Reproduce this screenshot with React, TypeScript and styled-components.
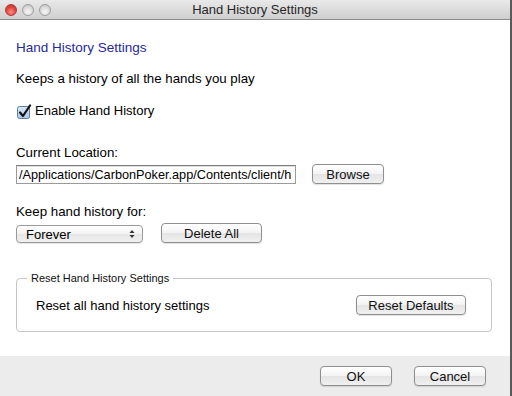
import React from "react";
import styled, { createGlobalStyle } from "styled-components";

const GlobalStyle = createGlobalStyle`
  html, body {
    margin: 0;
    padding: 0;
    background: #ffffff;
  }
  body {
    font-family: "Liberation Sans", Arial, sans-serif;
    font-size: 13px;
    color: #000;
  }
`;

const Window = styled.div`
  width: 510px;
  height: 396px;
  border-right: 2px solid #5a5a5a;
  display: flex;
  flex-direction: column;
  background: #fff;
  overflow: hidden;
`;

const TitleBar = styled.div`
  height: 20px;
  flex: none;
  display: flex;
  align-items: center;
  position: relative;
  background: linear-gradient(#e9e9e9, #cfcfcf);
  border-bottom: 1px solid #8c8c8c;
  box-sizing: border-box;
`;

const Lights = styled.div`
  display: flex;
  gap: 5px;
  padding-left: 5px;
`;

const Light = styled.span<{ $red?: boolean }>`
  width: 12px;
  height: 12px;
  border-radius: 50%;
  box-sizing: border-box;
  border: 1px solid ${(p) => (p.$red ? "#b13a38" : "#9d9d9d")};
  background: ${(p) =>
    p.$red
      ? "radial-gradient(circle at 50% 70%, #ff8a86 0%, #e0443e 55%, #b8302b 100%)"
      : "radial-gradient(circle at 50% 70%, #f7f7f7 0%, #d8d8d8 60%, #b9b9b9 100%)"};
`;

const WindowTitle = styled.div`
  position: absolute;
  left: 0;
  right: 0;
  text-align: center;
  font-size: 13px;
  color: #262626;
  pointer-events: none;
`;

const Content = styled.div`
  flex: 1;
  padding: 20px 18px 0 16px;
  display: flex;
  flex-direction: column;
`;

const Heading = styled.div`
  color: #1f2a9c;
  font-size: 13.5px;
  line-height: 16px;
`;

const Text = styled.div<{ $top?: number }>`
  margin-top: ${(p) => p.$top ?? 0}px;
  line-height: 16px;
  font-size: 13.3px;
`;

const CheckRow = styled.label`
  display: flex;
  align-items: center;
  gap: 3px;
  margin-top: 16px;
  margin-left: 1px;
  line-height: 16px;
`;

const Row = styled.div<{ $top?: number; $gap: number }>`
  display: flex;
  align-items: center;
  gap: ${(p) => p.$gap}px;
  margin-top: ${(p) => p.$top ?? 0}px;
`;

const PathField = styled.div`
  width: 280px;
  height: 19px;
  box-sizing: border-box;
  border: 1px solid #9a9a9a;
  border-top-color: #7d7d7d;
  box-shadow: inset 0 1px 0 #e0e0e0;
  padding: 1px 1px 0 2px;
  overflow: hidden;
  white-space: nowrap;
  line-height: 16px;
  font-size: 12.7px;
`;

const Button = styled.div<{ $w: number }>`
  width: ${(p) => p.$w}px;
  height: 20px;
  flex: none;
  box-sizing: border-box;
  border: 1px solid #8f8f8f;
  border-radius: 4px;
  background: linear-gradient(#ffffff 0%, #f3f3f3 50%, #e4e4e4 51%, #f0f0f0 100%);
  box-shadow: 0 1px 1px rgba(0, 0, 0, 0.12);
  display: flex;
  align-items: center;
  justify-content: center;
  font-size: 13px;
  color: #111;
`;

const Select = styled.div`
  width: 127px;
  height: 18px;
  margin-top: 2px;
  box-sizing: border-box;
  border: 1px solid #9a9a9a;
  border-radius: 4px;
  background: linear-gradient(#ffffff 0%, #f2f2f2 50%, #e6e6e6 51%, #f1f1f1 100%);
  box-shadow: 0 1px 1px rgba(0, 0, 0, 0.1);
  display: flex;
  align-items: center;
  justify-content: space-between;
  padding: 0 7px 0 9px;
  font-size: 13px;
`;

const Group = styled.div`
  position: relative;
  margin-top: 35px;
  height: 54px;
  padding: 0 25px 0 19px;
  box-sizing: border-box;
  border: 1px solid #c6c6c6;
  border-radius: 4px;
  display: flex;
  align-items: center;
  justify-content: space-between;
`;

const GroupTitle = styled.span`
  position: absolute;
  top: -8px;
  left: 10px;
  padding: 0 4px;
  background: #fff;
  font-size: 11px;
  line-height: 14px;
  color: #111;
`;

const Footer = styled.div`
  height: 40px;
  flex: none;
  background: #ececec;
  display: flex;
  justify-content: flex-end;
  align-items: flex-start;
  gap: 22px;
  padding: 10px 24px 0 0;
  box-sizing: border-box;
`;

const Checkbox = () => (
  <svg width="15" height="15" viewBox="0 0 15 15">
    <defs>
      <linearGradient id="cb" x1="0" y1="0" x2="0" y2="1">
        <stop offset="0" stopColor="#dbe8f6" />
        <stop offset="1" stopColor="#a9c6e8" />
      </linearGradient>
    </defs>
    <rect x="0.5" y="2.5" width="12" height="12" rx="2" fill="url(#cb)" stroke="#5f7fa6" />
    <path d="M3 8.5 L6 12 L13 1.5" fill="none" stroke="#111" strokeWidth="2.2" strokeLinecap="round" strokeLinejoin="round" />
  </svg>
);

const Stepper = () => (
  <svg width="6" height="10" viewBox="0 0 6 10">
    <path d="M0.5 4 L3 1 L5.5 4 Z" fill="#333" />
    <path d="M0.5 6 L3 9 L5.5 6 Z" fill="#333" />
  </svg>
);

const App: React.FC = () => {
  return (
    <>
      <GlobalStyle />
      <Window>
        <TitleBar>
          <Lights>
            <Light $red />
            <Light />
            <Light />
          </Lights>
          <WindowTitle>Hand History Settings</WindowTitle>
        </TitleBar>

        <Content>
          <Heading>Hand History Settings</Heading>
          <Text $top={15}>Keeps a history of all the hands you play</Text>
          <CheckRow>
            <Checkbox />
            Enable Hand History
          </CheckRow>

          <Text $top={26}>Current Location:</Text>
          <Row $top={3} $gap={16}>
            <PathField>/Applications/CarbonPoker.app/Contents/client/h</PathField>
            <Button $w={72}>Browse</Button>
          </Row>

          <Text $top={20}>Keep hand history for:</Text>
          <Row $top={3} $gap={18}>
            <Select>
              Forever
              <Stepper />
            </Select>
            <Button $w={101}>Delete All</Button>
          </Row>

          <Group>
            <GroupTitle>Reset Hand History Settings</GroupTitle>
            <span>Reset all hand history settings</span>
            <Button $w={110}>Reset Defaults</Button>
          </Group>
        </Content>

        <Footer>
          <Button $w={72}>OK</Button>
          <Button $w={72}>Cancel</Button>
        </Footer>
      </Window>
    </>
  );
};

export default App;
